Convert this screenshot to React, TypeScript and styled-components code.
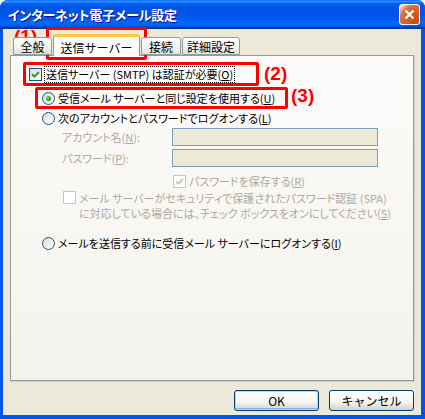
import React from "react"
import styled, { createGlobalStyle } from "styled-components"

const GlobalStyle = createGlobalStyle`
  html, body {
    margin: 0;
    padding: 0;
    background: #ffffff;
  }
  * {
    box-sizing: border-box;
  }
`

const Window = styled.div`
  position: relative;
  width: 425px;
  height: 419px;
  display: flex;
  flex-direction: column;
  background: #0054e8;
  border-radius: 8px 8px 0 0;
  overflow: hidden;
  font-family: "Noto Sans CJK JP", "Noto Sans", sans-serif;
  font-size: 12px;
  color: #000;
`

const TitleBar = styled.div`
  height: 29px;
  flex: none;
  display: flex;
  align-items: center;
  justify-content: space-between;
  padding: 0 5px 0 8px;
  background: linear-gradient(
    to bottom,
    #0058ee 0%,
    #3593ff 4%,
    #288eff 6%,
    #127dff 8%,
    #036ffc 10%,
    #0262ee 14%,
    #0057e5 20%,
    #0054e3 24%,
    #0055eb 56%,
    #005bf5 66%,
    #026afe 76%,
    #0062ef 86%,
    #0052d6 92%,
    #0040ab 94%,
    #003092 100%
  );
`

const TitleText = styled.span`
  color: #fff;
  font-weight: 700;
  font-size: 13px;
  font-feature-settings: "palt";
  letter-spacing: -0.2px;
  text-shadow: 1px 1px #0f1089;
`

const CloseButton = styled.div`
  width: 21px;
  height: 21px;
  border: 1px solid #fff;
  border-radius: 3px;
  display: flex;
  align-items: center;
  justify-content: center;
  background: radial-gradient(
    circle at 90% 90%,
    #cc4600 0%,
    #dc6527 55%,
    #cd7546 70%,
    #ffccb2 90%,
    #fff 100%
  );
`

const Body = styled.div`
  flex: 1;
  margin: 0 4px 4px 3px;
  padding: 4px 7px 0 7px;
  background: #ece9d8;
  display: flex;
  flex-direction: column;
`

const TabStrip = styled.div`
  height: 22px;
  display: flex;
  align-items: flex-end;
  padding-left: 2px;
  position: relative;
  z-index: 1;
`

const Tab = styled.div<{ $width: number; $active?: boolean }>`
  width: ${(p) => p.$width}px;
  height: ${(p) => (p.$active ? 22 : 18)}px;
  margin: ${(p) => (p.$active ? "0 0 -1px 1px" : "0 0 0 1px")};
  display: flex;
  align-items: center;
  justify-content: center;
  padding-top: ${(p) => (p.$active ? 1 : 0)}px;
  border: 1px solid #919b9c;
  border-bottom: ${(p) => (p.$active ? "none" : "1px solid #919b9c")};
  border-top: ${(p) => (p.$active ? "3px solid #ffc83c" : "1px solid #919b9c")};
  border-radius: 3px 3px 0 0;
  background: ${(p) =>
    p.$active ? "#fcfcfe" : "linear-gradient(to bottom, #fff 0%, #f2f2ef 60%, #e3e2dc 100%)"};
  white-space: nowrap;
`

const Panel = styled.div`
  height: 326px;
  border: 1px solid #919b9c;
  box-shadow: 1px 1px 0 #d0cec4;
  background: linear-gradient(to bottom, #fdfbfa 0%, #f8f7f3 50%, #f3f2ec 100%);
  padding: 10px 0 0 18px;
  display: flex;
  flex-direction: column;
  font-size: 11px;
  font-feature-settings: "palt";
`

const Row = styled.div<{ $top: number; $indent: number; $height?: number }>`
  display: flex;
  align-items: center;
  gap: 3px;
  height: ${(p) => p.$height ?? 16}px;
  margin-top: ${(p) => p.$top}px;
  margin-left: ${(p) => p.$indent}px;
  white-space: nowrap;
`

const TopRow = styled(Row)`
  align-items: flex-start;
  height: auto;
`

const Label = styled.span<{ $disabled?: boolean }>`
  color: ${(p) => (p.$disabled ? "#aca899" : "#000")};
  line-height: 15px;
`

const FieldLabel = styled(Label)`
  width: 107px;
`

const FocusLabel = styled(Label)`
  outline: 1px dotted #000;
  outline-offset: 0;
  padding: 0 1px;
`

const TextField = styled.div`
  width: 206px;
  height: 18px;
  border: 1px solid #7f9db9;
  background: #ece9d8;
`

const Box = styled.span<{ $disabled?: boolean }>`
  width: 13px;
  height: 13px;
  flex: none;
  display: flex;
  align-items: center;
  justify-content: center;
  border: 1px solid ${(p) => (p.$disabled ? "#cac8bb" : "#1c5180")};
  background: ${(p) =>
    p.$disabled ? "#fff" : "linear-gradient(135deg, #dcdcd7 0%, #fff 100%)"};
`

const Radio = styled.span<{ $checked?: boolean }>`
  width: 13px;
  height: 13px;
  flex: none;
  border-radius: 50%;
  display: flex;
  align-items: center;
  justify-content: center;
  border: 1px solid #1c5180;
  background: linear-gradient(135deg, #dcdcd7 0%, #fff 100%);
  &::after {
    content: "";
    display: ${(p) => (p.$checked ? "block" : "none")};
    width: 5px;
    height: 5px;
    border-radius: 50%;
    background: radial-gradient(circle at 35% 35%, #6fe06b 0%, #21a121 60%, #0a7a0a 100%);
  }
`

const ButtonRow = styled.div`
  display: flex;
  justify-content: flex-end;
  gap: 10px;
  margin-top: 9px;
`

const Button = styled.div`
  width: 85px;
  height: 21px;
  border: 1px solid #003c74;
  border-radius: 3px;
  display: flex;
  align-items: center;
  justify-content: center;
  background: linear-gradient(to bottom, #fff 0%, #f3f3ef 60%, #d6d0c5 100%);
`

const DefaultButton = styled(Button)`
  box-shadow: inset 0 0 0 1px #bcd4f6, inset 0 -1px 0 1px #89ade4;
`

const Mark = styled.div<{ $x: number; $y: number; $w: number; $h: number }>`
  position: absolute;
  left: ${(p) => p.$x}px;
  top: ${(p) => p.$y}px;
  width: ${(p) => p.$w}px;
  height: ${(p) => p.$h}px;
  border: 3px solid #ff0000;
  border-radius: 2px;
  pointer-events: none;
`

const MarkNumber = styled.span<{ $x: number; $y: number }>`
  position: absolute;
  left: ${(p) => p.$x}px;
  top: ${(p) => p.$y}px;
  font-family: "Liberation Sans", Arial, sans-serif;
  font-weight: 700;
  font-size: 19px;
  line-height: 19px;
  color: #ff0000;
`

const Check = ({ color }: { color: string }) => (
  <svg width="9" height="9" viewBox="0 0 9 9">
    <path d="M1 4.2 L3.4 6.6 L8 2" fill="none" stroke={color} strokeWidth="2" />
  </svg>
)

const App = () => {
  return (
    <>
      <GlobalStyle />
      <Window>
        <TitleBar>
          <TitleText>インターネット電子メール設定</TitleText>
          <CloseButton>
            <svg width="11" height="11" viewBox="0 0 11 11">
              <path d="M1.5 1.5 L9.5 9.5 M9.5 1.5 L1.5 9.5" stroke="#fff" strokeWidth="2.2" />
            </svg>
          </CloseButton>
        </TitleBar>
        <Body>
          <TabStrip>
            <Tab $width={39}>全般</Tab>
            <Tab $width={87} $active>
              送信サーバー
            </Tab>
            <Tab $width={40}>接続</Tab>
            <Tab $width={58}>詳細設定</Tab>
          </TabStrip>
          <Panel>
            <Row $top={0} $indent={0}>
              <Box>
                <Check color="#21a121" />
              </Box>
              <FocusLabel>
                送信サーバー (SMTP) は認証が必要(<u>O</u>)
              </FocusLabel>
            </Row>
            <Row $top={8} $indent={13}>
              <Radio $checked />
              <Label>
                受信メール サーバーと同じ設定を使用する(<u>U</u>)
              </Label>
            </Row>
            <Row $top={4} $indent={13}>
              <Radio />
              <Label>
                次のアカウントとパスワードでログオンする(<u>L</u>)
              </Label>
            </Row>
            <Row $top={2} $indent={33} $height={18}>
              <FieldLabel $disabled>
                アカウント名(<u>N</u>):
              </FieldLabel>
              <TextField />
            </Row>
            <Row $top={3} $indent={33} $height={18}>
              <FieldLabel $disabled>
                パスワード(<u>P</u>):
              </FieldLabel>
              <TextField />
            </Row>
            <Row $top={6} $indent={144}>
              <Box $disabled>
                <Check color="#cac8bb" />
              </Box>
              <Label $disabled>
                パスワードを保存する(<u>R</u>)
              </Label>
            </Row>
            <TopRow $top={2} $indent={34}>
              <Box $disabled />
              <Label $disabled>
                メール サーバーがセキュリティで保護されたパスワード認証 (SPA)
                <br />
                に対応している場合には、チェック ボックスをオンにしてください(<u>S</u>)
              </Label>
            </TopRow>
            <Row $top={14} $indent={13}>
              <Radio />
              <Label>
                メールを送信する前に受信メール サーバーにログオンする(<u>I</u>)
              </Label>
            </Row>
          </Panel>
          <ButtonRow>
            <DefaultButton>OK</DefaultButton>
            <Button>キャンセル</Button>
          </ButtonRow>
        </Body>
        <Mark $x={46} $y={27} $w={101} $h={33} />
        <MarkNumber $x={14} $y={27}>
          (1)
        </MarkNumber>
        <Mark $x={23} $y={62} $w={236} $h={24} />
        <MarkNumber $x={264} $y={64}>
          (2)
        </MarkNumber>
        <Mark $x={35} $y={87} $w={253} $h={22} />
        <MarkNumber $x={291} $y={86}>
          (3)
        </MarkNumber>
      </Window>
    </>
  )
}

export default App
